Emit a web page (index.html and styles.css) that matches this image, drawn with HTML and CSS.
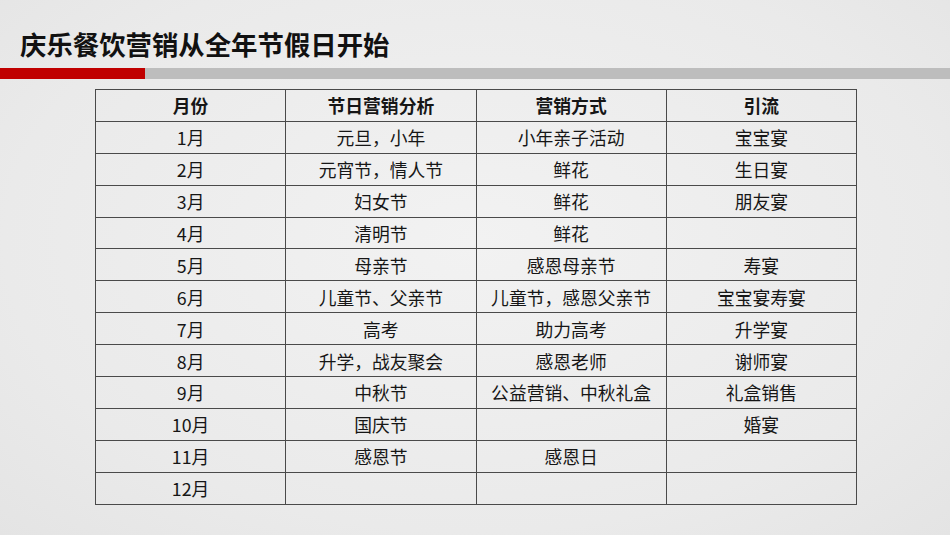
FILE: index.html
```html
<!DOCTYPE html>
<html lang="zh">
<head>
<meta charset="utf-8">
<link rel="stylesheet" href="styles.css">
</head>
<body>
<div class="slide">
  <h1 class="title">庆乐餐饮营销从全年节假日开始</h1>
  <div class="rule"><div class="rule-red"></div><div class="rule-gray"></div></div>
  <table class="grid">
    <thead>
      <tr><th>月份</th><th>节日营销分析</th><th>营销方式</th><th>引流</th></tr>
    </thead>
    <tbody>
      <tr><td>1月</td><td>元旦，小年</td><td>小年亲子活动</td><td>宝宝宴</td></tr>
      <tr><td>2月</td><td>元宵节，情人节</td><td>鲜花</td><td>生日宴</td></tr>
      <tr><td>3月</td><td>妇女节</td><td>鲜花</td><td>朋友宴</td></tr>
      <tr><td>4月</td><td>清明节</td><td>鲜花</td><td></td></tr>
      <tr><td>5月</td><td>母亲节</td><td>感恩母亲节</td><td>寿宴</td></tr>
      <tr><td>6月</td><td>儿童节、父亲节</td><td>儿童节，感恩父亲节</td><td>宝宝宴寿宴</td></tr>
      <tr><td>7月</td><td>高考</td><td>助力高考</td><td>升学宴</td></tr>
      <tr><td>8月</td><td>升学，战友聚会</td><td>感恩老师</td><td>谢师宴</td></tr>
      <tr><td>9月</td><td>中秋节</td><td>公益营销、中秋礼盒</td><td>礼盒销售</td></tr>
      <tr><td>10月</td><td>国庆节</td><td></td><td>婚宴</td></tr>
      <tr><td>11月</td><td>感恩节</td><td>感恩日</td><td></td></tr>
      <tr><td>12月</td><td></td><td></td><td></td></tr>
    </tbody>
  </table>
</div>
</body>
</html>
```

FILE: styles.css
```css
html, body {
  margin: 0;
  padding: 0;
}
body {
  width: 950px;
  height: 535px;
  overflow: hidden;
  background: #ededed;
  font-family: "Noto Sans CJK SC", "Noto Sans", sans-serif;
  color: #111;
}
.slide {
  width: 950px;
  height: 535px;
  background: radial-gradient(ellipse at 50% 45%, #f2f2f2 0%, #eaeaea 70%, #e4e4e4 100%);
  display: flex;
  flex-direction: column;
}
.title {
  margin: 0;
  padding: 27px 0 0 20px;
  height: 41px;
  font-size: 26.4px;
  line-height: 34px;
  font-weight: 700;
  color: #111;
}
.rule {
  display: flex;
  height: 11px;
}
.rule-red {
  width: 145px;
  background: #c00000;
}
.rule-gray {
  flex: 1;
  background: #bdbdbd;
}
.grid {
  margin: 10px 0 0 95px;
  width: 762px;
  border-collapse: collapse;
  table-layout: fixed;
  font-size: 17.8px;
}
.grid th, .grid td {
  border: 1.5px solid #4a4a4a;
  height: 30.9px;
  padding: 0;
  text-align: center;
  vertical-align: middle;
  line-height: 22px;
  font-weight: 400;
  color: #161616;
}
.grid th {
  font-weight: 700;
}
```
